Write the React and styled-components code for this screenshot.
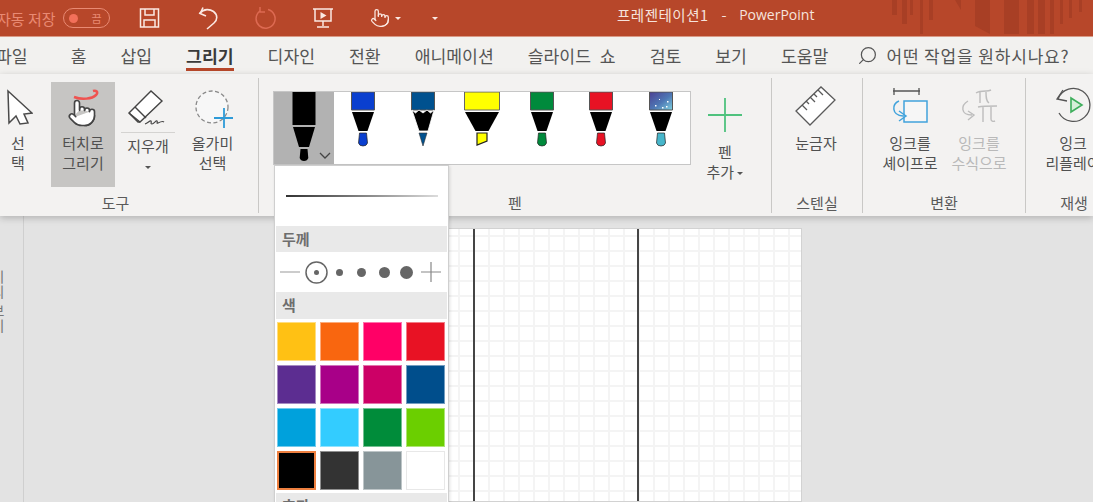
import React from "react";
import styled, { createGlobalStyle } from "styled-components";
import { Pointer, Search } from "lucide-react";

const Global = createGlobalStyle`
  html, body { margin: 0; padding: 0; background: #e3e3e3; }
  body { font-family: "Noto Sans CJK KR", "Noto Sans", sans-serif; overflow: hidden; }
`;

const Page = styled.div`
  position: relative;
  width: 1093px;
  height: 502px;
  overflow: hidden;
  display: flex;
  flex-direction: column;
`;

/* ---------- title bar ---------- */
const TitleBar = styled.header`
  position: relative;
  flex: 0 0 37px;
  background: #b7472a;
  display: flex;
  align-items: center;
  color: #fff;
  border-bottom: 1px solid #d99a86;
  box-sizing: border-box;
`;
const AutoSave = styled.span`
  margin-left: -3px;
  font-size: 15px;
  color: #e98a73;
  white-space: nowrap;
`;
const Toggle = styled.span`
  box-sizing: border-box;
  margin-left: 7px;
  width: 47px;
  height: 20px;
  border: 1px solid #e98a73;
  border-radius: 10px;
  display: flex;
  align-items: center;
  justify-content: space-between;
  padding: 0 7px 0 5px;
  font-size: 11px;
  color: #e98a73;
`;
const ToggleDot = styled.i`
  width: 9px;
  height: 9px;
  border-radius: 50%;
  background: #f2705a;
`;
const QatIcon = styled.span`
  display: flex;
  margin-left: ${(p) => p.$ml}px;
`;
const DocTitle = styled.div`
  position: absolute;
  left: 617px;
  top: 5px;
  display: flex;
  font-size: 14.5px;
  line-height: 20px;
  color: #f6e3dd;
  white-space: nowrap;
  letter-spacing: 0.5px;
`;
const TitleDash = styled.span`
  margin-left: 13px;
`;
const ProductName = styled.span`
  margin-left: 12px;
  font-family: "Open Sans", "Noto Sans", sans-serif;
  font-size: 14px;
  letter-spacing: 0;
`;
const TitleArt = styled.svg`
  position: absolute;
  right: 0;
  top: 0;
`;

/* ---------- tabs ---------- */
const TabBar = styled.nav`
  flex: 0 0 37px;
  background: #f2f1ef;
  display: flex;
  align-items: center;
  margin-left: -4px;
  white-space: nowrap;
`;
const Tab = styled.span`
  position: relative;
  font-size: 17.2px;
  line-height: 37px;
  word-spacing: 5px;
  color: ${(p) => (p.$active ? "#3a3a3a" : "#555")};
  font-weight: ${(p) => (p.$active ? 700 : 400)};
  margin-left: ${(p) => p.$ml ?? 34}px;
  ${(p) =>
    p.$active &&
    `&::after{content:"";position:absolute;left:0;right:0;bottom:3px;height:3px;background:#b7472a;}`}
`;
const TellMe = styled.span`
  display: flex;
  align-items: center;
  gap: 8px;
  margin-left: 29px;
  font-size: 17px;
  color: #555;
  letter-spacing: 0.85px;
`;
const FlippedSearch = styled(Search)`
  transform: scaleX(-1);
`;

/* ---------- ribbon ---------- */
const Ribbon = styled.section`
  position: relative;
  z-index: 1;
  flex: 0 0 142px;
  background: #f3f2f1;
  display: flex;
  box-shadow: 0 2px 7px rgba(0, 0, 0, 0.22);
  overflow: hidden;
`;
const Group = styled.div`
  box-sizing: border-box;
  flex: 0 0 ${(p) => p.$w}px;
  margin-left: ${(p) => p.$ml ?? 0}px;
  height: 135px;
  margin-top: 4px;
  display: flex;
  flex-direction: column;
  border-right: ${(p) => (p.$last ? "none" : "1px solid #c9c8c6")};
`;
const GroupBody = styled.div`
  flex: 0 0 115px;
  display: flex;
  align-items: flex-start;
  padding-top: 4px;
  padding-left: ${(p) => p.$pl ?? 0}px;
  box-sizing: border-box;
`;
const GroupLabel = styled.div`
  font-size: 15px;
  line-height: 20px;
  text-align: center;
  color: #5a5a5a;
`;
const ToolButton = styled.div`
  flex: 0 0 ${(p) => p.$w}px;
  margin-left: ${(p) => p.$ml ?? 0}px;
  height: 105px;
  display: flex;
  flex-direction: column;
  align-items: center;
  background: ${(p) => (p.$on ? "#c6c5c3" : "transparent")};
  color: ${(p) => (p.$off ? "#b9b9b9" : "#505050")};
  font-size: 15px;
  line-height: 20px;
  text-align: center;
  white-space: nowrap;
`;
const IconSlot = styled.div`
  height: ${(p) => p.$h ?? 51}px;
  flex: 0 0 ${(p) => p.$h ?? 51}px;
  width: 100%;
  padding-top: ${(p) => p.$pt ?? 0}px;
  display: flex;
  justify-content: center;
  align-items: flex-start;
  box-sizing: border-box;
  ${(p) => p.$rule && "border-bottom: 1px solid #d4d3d1;"}
`;
const Label = styled.div`
  padding-top: ${(p) => p.$pt ?? 0}px;
`;
const Caret = styled.span`
  display: inline-block;
  width: 0;
  height: 0;
  border-left: 3px solid transparent;
  border-right: 3px solid transparent;
  border-top: 3px solid ${(p) => p.$c ?? "#555"};
  vertical-align: middle;
  margin-left: ${(p) => p.$ml ?? 0}px;
`;

/* ---------- pen gallery ---------- */
const Gallery = styled.div`
  flex: 0 0 418px;
  height: 74px;
  margin-top: 9px;
  box-sizing: border-box;
  background: #fff;
  border: 1px solid #c6c6c6;
  display: flex;
  overflow: hidden;
`;
const PenCell = styled.div`
  position: relative;
  flex: 0 0 59.5px;
  min-width: 0;
  height: 100%;
  display: flex;
  justify-content: center;
  background: ${(p) => (p.$on ? "#b2b2b2" : "transparent")};
  svg { flex: none; }
`;
const ChevronMark = styled.svg`
  position: absolute;
  right: 3px;
  bottom: 5px;
`;

/* ---------- workspace ---------- */
const Workspace = styled.main`
  flex: 1;
  display: flex;
  background: #e3e3e3;
  min-height: 0;
`;
const ThumbPane = styled.aside`
  flex: 0 0 24px;
  box-sizing: border-box;
  border-right: 1px solid #cfcfcf;
  overflow: hidden;
  padding-top: 54px;
  display: flex;
  justify-content: flex-end;
`;
const ThumbText = styled.span`
  writing-mode: vertical-rl;
  font-size: 14px;
  letter-spacing: 1px;
  color: #777;
  margin-right: 18px;
  line-height: 15px;
  white-space: nowrap;
  align-self: flex-start;
`;
const Stage = styled.div`
  flex: 1;
  display: flex;
  justify-content: center;
  padding-top: 12px;
`;
const Slide = styled.div`
  position: relative;
  box-sizing: border-box;
  width: 487px;
  height: 274px;
  border: 1px solid #d2d2d2;
  background-color: #fff;
  background-image:
    linear-gradient(90deg, #f4f4f4 2px, transparent 2px),
    linear-gradient(180deg, #f4f4f4 2px, transparent 2px);
  background-size: 15px 15px;
  background-position: 7px 6px;
`;
const Guide = styled.i`
  position: absolute;
  top: 0;
  bottom: 0;
  left: ${(p) => p.$x}px;
  width: 2px;
  background: #454545;
`;

/* ---------- drop-down ---------- */
const Dropdown = styled.div`
  position: absolute;
  z-index: 3;
  left: 274px;
  top: 165px;
  width: 175px;
  height: 345px;
  box-sizing: border-box;
  background: #fff;
  border: 1px solid #cfcfcf;
  box-shadow: 1px 1px 3px rgba(0, 0, 0, 0.12);
  padding: 0 1px;
`;
const Preview = styled.div`
  height: 60px;
  display: flex;
  align-items: center;
  justify-content: center;
`;
const PreviewLine = styled.i`
  display: block;
  width: 152px;
  height: 1.5px;
  background: linear-gradient(90deg, #333, #8a8a8a 55%, #dcdcdc);
`;
const SectionHead = styled.div`
  height: ${(p) => p.$h ?? 26}px;
  background: #e9e9e9;
  padding-left: 6px;
  font-size: 15px;
  font-weight: 700;
  line-height: 26px;
  color: #6e6e6e;
`;
const WeightRow = styled.div`
  height: 40px;
  display: flex;
  align-items: center;
  padding-left: 4px;
`;
const WeightSlot = styled.span`
  flex: 0 0 ${(p) => p.$w}px;
  display: flex;
  justify-content: center;
`;
const Dot = styled.i`
  display: block;
  width: ${(p) => p.$s}px;
  height: ${(p) => p.$s}px;
  border-radius: 50%;
  background: #666;
`;
const Swatches = styled.div`
  display: grid;
  grid-template-columns: repeat(4, 39px);
  grid-auto-rows: 39px;
  gap: 4px;
  padding: 3px 0 3px 1px;
`;
const Swatch = styled.i`
  display: block;
  box-sizing: border-box;
  background: ${(p) => p.$c};
  border: 1px solid ${(p) => (p.$on ? "#ee8040" : p.$c === "#ffffff" ? "#e8e8e8" : "rgba(255,255,255,.45)")};
  outline: ${(p) => (p.$on ? "1px solid #ee8040" : "none")};
  outline-offset: -2px;
`;

/* ---------- drawings ---------- */
const Save = () => (
  <svg width="22" height="22" viewBox="0 0 22 22" fill="none" stroke="#fbe9e3" strokeWidth="1.5">
    <path d="M1.5 2h18v18h-18z" />
    <path d="M6 2v6h9V2M5 20v-7h11v7" />
  </svg>
);
const Undo = () => (
  <svg width="22" height="24" viewBox="0 0 22 24" fill="none" stroke="#fbe9e3" strokeWidth="1.6">
    <path d="M1 7l7 3M2 8l3-6.5" />
    <path d="M2 7C6 2.500 12 3 15.500 5.500 20 9 19.500 14 16 17l-7 6" />
  </svg>
);
const Redo = () => (
  <svg width="22" height="22" viewBox="0 0 22 22" fill="none" stroke="#dd6a52" strokeWidth="1.5">
    <path d="M13 2.500A9.500 9.500 0 1 1 5 4" />
    <path d="M5 0v5h5" />
  </svg>
);
const Present = () => (
  <svg width="20" height="20" viewBox="0 0 20 20" fill="none" stroke="#fbe9e3" strokeWidth="1.5">
    <path d="M0 1h20M2 1v12h16V1M10 13v5M4 19h12" />
    <path d="M7.500 4l6 3.500-6 3.500z" fill="#fbe9e3" stroke="none" />
  </svg>
);
const Arrow = () => (
  <svg width="30" height="44" viewBox="0 0 30 44" fill="#fff" stroke="#4a4a4a" strokeWidth="1.5">
    <path d="M5 9l24 22-8 1 4 9-8 1-4-8-7 7z" />
  </svg>
);
const TouchDraw = () => (
  <svg width="40" height="44" viewBox="0 0 40 44" fill="none">
    <path d="M11 12c8 3 18 2 22-2 3-3 0-5-3-4" stroke="#ef5350" strokeWidth="2.500" />
  </svg>
);
const HandWrap = styled.span`
  position: relative;
  display: flex;
  margin-top: 3px;
`;
const HandOver = styled.span`
  position: absolute;
  left: 4px;
  top: 13px;
  display: flex;
`;
const Eraser = () => (
  <svg width="42" height="42" viewBox="0 0 42 42" fill="none" stroke="#444" strokeWidth="1.400">
    <path d="M2 24L24 2l11 10-22 21z" fill="#fff" />
    <path d="M8 18l11 11" />
    <path d="M2 24l9 9h2" />
    <path d="M18 35c3-1 5-4 6-3s-1 3 1 3 4-4 5-3-1 3 1 2 5-2 6-1" strokeWidth="1.200" />
  </svg>
);
const Lasso = () => (
  <svg width="40" height="42" viewBox="0 0 40 42" fill="none">
    <circle cx="19" cy="18" r="16" stroke="#8a8a8a" strokeWidth="1.300" strokeDasharray="4 2.500" fill="#f7f7f7" />
    <path d="M31 19v20M21 29h20" stroke="#2e9bd8" strokeWidth="1.800" />
  </svg>
);
const Ruler = () => (
  <svg width="42" height="42" viewBox="0 0 42 42" fill="none" stroke="#5a5a5a" strokeWidth="1.300">
    <path d="M1 25L26 1l14 13-25 25z" fill="#fff" />
    <path d="M7 19l5 5M11 15l3 3M15 11l5 5M19 8l3 3M23 4l5 5" />
  </svg>
);
const InkShape = () => (
  <svg width="38" height="36" viewBox="0 0 38 36" fill="none">
    <path d="M2 4h27M3 1v7M28 1v7" stroke="#555" strokeWidth="1.300" />
    <path d="M13 14h23v21H13z" fill="#f6f6f6" stroke="#41a3dc" strokeWidth="1.500" />
    <path d="M8 14C1 17 0 28 12 29M8 24l7 5-7 5" stroke="#41a3dc" strokeWidth="1.500" />
  </svg>
);
const InkMath = () => (
  <svg width="38" height="36" viewBox="0 0 38 36" fill="none" stroke="#bdbdbd" strokeWidth="1.400">
    <path d="M16 6c3-2 8-2 10-2s3 0 5-1M20 5v11M26 5c0 5 0 9 3 11" />
    <path d="M18 20c5-1 12-1 19-1M23 20v15M31 20v12c0 2 2 3 4 2" />
    <path d="M8 14C1 18 0 28 12 28M8 24l6 4-6 5" />
  </svg>
);
const Replay = () => (
  <svg width="36" height="36" viewBox="0 0 36 36" fill="none">
    <path d="M3 12A16.500 16.500 0 1 1 4 26" stroke="#555" strokeWidth="1.300" />
    <path d="M8 3L2 12l10 2" stroke="#555" strokeWidth="1.300" />
    <path d="M16 11l11 7-11 7z" fill="#d6efd9" stroke="#3eae5c" strokeWidth="1.600" />
  </svg>
);
const AddPlus = () => (
  <svg width="34" height="34" viewBox="0 0 34 34" stroke="#4fc27e" strokeWidth="1.800">
    <path d="M17 0v34M0 17h34" />
  </svg>
);
const SelectedPen = () => (
  <svg width="60" height="72" viewBox="0 0 60 72">
    <path d="M18.500 0h23v33h-23z" fill="#000" />
    <path d="M19 35h22l-6 20H25z" fill="#000" />
    <path d="M26.500 57h7l.8 9q-1 3-4.300 3t-4.300-3z" fill="#000" />
  </svg>
);
const PenSvg = ({ color, pencil, marker, galaxy }) => (
  <svg width="60" height="72" viewBox="0 0 60 72">
    {galaxy && (
      <defs>
        <linearGradient id="galaxy" x1="0" y1="0" x2="1" y2="1">
          <stop offset="0" stopColor="#4b3f93" />
          <stop offset=".55" stopColor="#4e78b5" />
          <stop offset="1" stopColor="#7fd1e0" />
        </linearGradient>
      </defs>
    )}
    {marker ? (
      <>
        <path d="M12.500 0h35v18h-35z" fill={color} stroke="#666" strokeWidth="1" />
        <path d="M13 20h34l-10.500 19h-13z" fill="#000" />
        <path d="M25 41h10v8l-10 4z" fill={color} stroke="#222" strokeWidth="1.200" />
      </>
    ) : (
      <>
        <path d="M18.500 0h23v18h-23z" fill={galaxy ? "url(#galaxy)" : color} stroke="#555" strokeWidth="1" />
        {galaxy && (
          <path d="M24 13h1.500v1.500H24zM31 15h1.500v1.500H31zM36 9h1.500v1.500H36zM28 7h1v1h-1zM35 14h1.500v1.500H35z" fill="#fff" />
        )}
        {pencil ? (
          <>
            <path d="M19 18l3.500 3 3.500-3 4 3 4-3 3.500 3 3.500-3-6 21h-9z" fill="#000" stroke="#fff" strokeWidth=".8" />
            <path d="M26 41h8l-4 13z" fill={color} stroke="#333" strokeWidth=".6" />
          </>
        ) : (
          <>
            <path d="M19 20h22l-6.500 19h-9z" fill="#000" />
            <path d="M26.500 41h7l1 10q-.8 3-4.500 3t-4.500-3z" fill={color} stroke="#222" strokeWidth=".7" />
          </>
        )}
      </>
    )}
  </svg>
);

const pens = [
  { color: "#0a3fcf" },
  { color: "#00518f", pencil: true },
  { color: "#ffff00", marker: true },
  { color: "#008a3c" },
  { color: "#e81224" },
  { color: "#47b6cb", galaxy: true },
];

const colors = [
  "#ffc114", "#f9660f", "#ff0066", "#e81224",
  "#5c2d91", "#a80088", "#cc0066", "#004e8c",
  "#00a1dc", "#33ccff", "#008c3a", "#6bcf00",
  "#000000", "#333333", "#879599", "#ffffff",
];

const tabs = ["파일", "홈", "삽입", "그리기", "디자인", "전환", "애니메이션", "슬라이드 쇼", "검토", "보기", "도움말"];

export default function App() {
  return (
    <Page>
      <Global />
      <TitleBar>
        <AutoSave>자동 저장</AutoSave>
        <Toggle>
          <ToggleDot />끔
        </Toggle>
        <QatIcon $ml={29}><Save /></QatIcon>
        <QatIcon $ml={37}><Undo /></QatIcon>
        <QatIcon $ml={35}><Redo /></QatIcon>
        <QatIcon $ml={36}><Present /></QatIcon>
        <QatIcon $ml={37}><Pointer size={20} color="#fbe9e3" strokeWidth={1.5} /></QatIcon>
        <QatIcon $ml={5}><Caret $c="#fbe9e3" /></QatIcon>
        <QatIcon $ml={31}><Caret $c="#fbe9e3" /></QatIcon>
        <DocTitle>
          프레젠테이션1<TitleDash>-</TitleDash><ProductName>PowerPoint</ProductName>
        </DocTitle>
        <TitleArt width="208" height="36" viewBox="0 0 208 36" fill="#a83f25">
          <path d="M7 0h5v15H7zM17 0h5v24h-5zM25 0h3v15h-3zM35 0h3v34h-3zM44 0h4v20h-4zM70 0l6 10V0zM90 0h15v34l-15-8zM119 0h15v34h-15zM142 0h7v34h-7zM153 0h7v34h-7zM165 0h4v34h-4zM175 0h3v24h-3zM184 0h3v18h-3zM194 0h3v12h-3z" />
        </TitleArt>
      </TitleBar>

      <TabBar>
        {tabs.map((t, i) => (
          <Tab key={t} $active={t === "그리기"} $ml={i === 0 ? 0 : i === 1 ? 43 : undefined}>{t}</Tab>
        ))}
        <TellMe>
          <FlippedSearch size={21} color="#555" strokeWidth={1.4} />
          어떤 작업을 원하시나요?
        </TellMe>
      </TabBar>

      <Ribbon>
        <Group $w={286} $ml={-27}>
          <GroupBody $pl={27}>
            <ToolButton $w={36}>
              <IconSlot><Arrow /></IconSlot>
              <Label>선<br />택</Label>
            </ToolButton>
            <ToolButton $w={64} $ml={15} $on>
              <IconSlot>
                <HandWrap>
                  <TouchDraw />
                  <HandOver><Pointer size={30} color="#444" fill="#fff" strokeWidth={1.3} /></HandOver>
                </HandWrap>
              </IconSlot>
              <Label>터치로<br />그리기</Label>
            </ToolButton>
            <ToolButton $w={54} $ml={6}>
              <IconSlot $rule $pt={7}><Eraser /></IconSlot>
              <Label $pt={3}>지우개<br /><Caret /></Label>
            </ToolButton>
            <ToolButton $w={49} $ml={13}>
              <IconSlot $pt={7}><Lasso /></IconSlot>
              <Label>올가미<br />선택</Label>
            </ToolButton>
          </GroupBody>
          <GroupLabel>도구</GroupLabel>
        </Group>

        <Group $w={513}>
          <GroupBody $pl={14}>
            <Gallery>
              <PenCell $on>
                <SelectedPen />
                <ChevronMark width="12" height="7" viewBox="0 0 12 7" fill="none" stroke="#444" strokeWidth="1.300">
                  <path d="M1 1l5 5 5-5" />
                </ChevronMark>
              </PenCell>
              {pens.map((p) => (
                <PenCell key={p.color}><PenSvg {...p} /></PenCell>
              ))}
            </Gallery>
            <ToolButton $w={50} $ml={9}>
              <IconSlot $h={60} $pt={16}><AddPlus /></IconSlot>
              <Label>펜<br />추가 <Caret /></Label>
            </ToolButton>
          </GroupBody>
          <GroupLabel>펜</GroupLabel>
        </Group>

        <Group $w={91}>
          <GroupBody $pl={19}>
            <ToolButton $w={50}>
              <IconSlot $pt={4}><Ruler /></IconSlot>
              <Label>눈금자</Label>
            </ToolButton>
          </GroupBody>
          <GroupLabel>스텐실</GroupLabel>
        </Group>

        <Group $w={163}>
          <GroupBody $pl={17}>
            <ToolButton $w={60}>
              <IconSlot $pt={5}><InkShape /></IconSlot>
              <Label>잉크를<br />셰이프로</Label>
            </ToolButton>
            <ToolButton $w={60} $ml={9} $off>
              <IconSlot $pt={5}><InkMath /></IconSlot>
              <Label>잉크를<br />수식으로</Label>
            </ToolButton>
          </GroupBody>
          <GroupLabel>변환</GroupLabel>
        </Group>

        <Group $w={96} $last>
          <GroupBody $pl={17}>
            <ToolButton $w={60}>
              <IconSlot $pt={5}><Replay /></IconSlot>
              <Label>잉크<br />리플레이</Label>
            </ToolButton>
          </GroupBody>
          <GroupLabel>재생</GroupLabel>
        </Group>
      </Ribbon>

      <Workspace>
        <ThumbPane>
          <ThumbText>미리 보기</ThumbText>
        </ThumbPane>
        <Stage>
          <Slide>
            <Guide $x={157} />
            <Guide $x={321} />
          </Slide>
        </Stage>
      </Workspace>

      <Dropdown>
        <Preview><PreviewLine /></Preview>
        <SectionHead>두께</SectionHead>
        <WeightRow>
          <WeightSlot $w={20}>
            <svg width="20" height="2"><path d="M0 1h20" stroke="#aaa" strokeWidth="1.200" /></svg>
          </WeightSlot>
          <WeightSlot $w={33}>
            <svg width="23" height="23" viewBox="0 0 23 23" fill="none">
              <circle cx="11.500" cy="11.500" r="10.500" stroke="#666" strokeWidth="1.500" />
              <circle cx="11.500" cy="11.500" r="2.500" fill="#666" />
            </svg>
          </WeightSlot>
          <WeightSlot $w={13}><Dot $s={7} /></WeightSlot>
          <WeightSlot $w={30}><Dot $s={9} /></WeightSlot>
          <WeightSlot $w={16}><Dot $s={11} /></WeightSlot>
          <WeightSlot $w={28}><Dot $s={13} /></WeightSlot>
          <WeightSlot $w={22}>
            <svg width="20" height="20" viewBox="0 0 20 20"><path d="M10 0v20M0 10h20" stroke="#888" strokeWidth="1.200" /></svg>
          </WeightSlot>
        </WeightRow>
        <SectionHead $h={27}>색</SectionHead>
        <Swatches>
          {colors.map((c) => (
            <Swatch key={c} $c={c} $on={c === "#000000"} />
          ))}
        </Swatches>
        <SectionHead>효과</SectionHead>
      </Dropdown>
    </Page>
  );
}
